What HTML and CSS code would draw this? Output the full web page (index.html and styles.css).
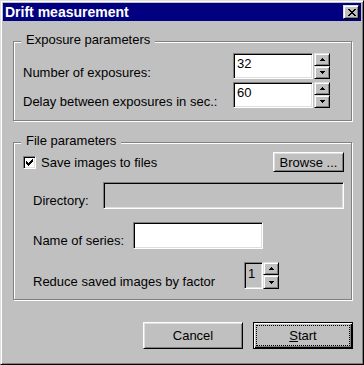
FILE: index.html
```html
<!DOCTYPE html>
<html>
<head>
<meta charset="utf-8">
<link rel="stylesheet" href="styles.css">
</head>
<body>
<div class="dialog">
  <div class="titlebar">
    <span class="title">Drift measurement</span>
    <span class="btn close"><svg width="8" height="7" viewBox="0 0 8 7" shape-rendering="crispEdges"><path d="M0 0h2v1h-2z M6 0h2v1h-2z M1 1h2v1h-2z M5 1h2v1h-2z M2 2h4v1h-4z M3 3h2v1h-2z M2 4h4v1h-4z M1 5h2v1h-2z M5 5h2v1h-2z M0 6h2v1h-2z M6 6h2v1h-2z" fill="#000"/></svg></span>
  </div>

  <div class="group g1">
    <span class="legend">Exposure parameters</span>
    <div class="row r26">
      <span class="label lb12">Number of exposures:</span>
      <span class="field num">32</span>
      <span class="spin">
        <span class="btn sb"><svg width="5" height="3" viewBox="0 0 5 3" shape-rendering="crispEdges"><path d="M2 0h1v1h-1z M1 1h3v1h-3z M0 2h5v1h-5z" fill="#000"/></svg></span>
        <span class="btn sb"><svg width="5" height="3" viewBox="0 0 5 3" shape-rendering="crispEdges"><path d="M0 0h5v1h-5z M1 1h3v1h-3z M2 2h1v1h-1z" fill="#000"/></svg></span>
      </span>
    </div>
    <div class="row r26">
      <span class="label lb12">Delay between exposures in sec.:</span>
      <span class="field num">60</span>
      <span class="spin">
        <span class="btn sb"><svg width="5" height="3" viewBox="0 0 5 3" shape-rendering="crispEdges"><path d="M2 0h1v1h-1z M1 1h3v1h-3z M0 2h5v1h-5z" fill="#000"/></svg></span>
        <span class="btn sb"><svg width="5" height="3" viewBox="0 0 5 3" shape-rendering="crispEdges"><path d="M0 0h5v1h-5z M1 1h3v1h-3z M2 2h1v1h-1z" fill="#000"/></svg></span>
      </span>
    </div>
  </div>

  <div class="group g2">
    <span class="legend">File parameters</span>
    <div class="row r20 center">
      <span class="check"><svg width="9" height="9" viewBox="0 0 9 9" shape-rendering="crispEdges"><path d="M1 3h1v3h-1z M2 4h1v3h-1z M3 5h1v3h-1z M4 4h1v3h-1z M5 3h1v3h-1z M6 2h1v3h-1z M7 1h1v3h-1z" fill="#000"/></svg></span>
      <span class="checktext">Save images to files</span>
      <span class="btn browse">Browse ...</span>
    </div>
    <div class="row r27 m10">
      <span class="label lb11 w70">Directory:</span>
      <span class="field dis dir"></span>
    </div>
    <div class="row r27 m13">
      <span class="label lb11 w100">Name of series:</span>
      <span class="field name"></span>
    </div>
    <div class="row r27 m13">
      <span class="label lb12 w211">Reduce saved images by factor</span>
      <span class="field dis fac">1</span>
      <span class="spin spin27">
        <span class="btn sb sb13"><svg width="5" height="3" viewBox="0 0 5 3" shape-rendering="crispEdges"><path d="M2 0h1v1h-1z M1 1h3v1h-3z M0 2h5v1h-5z" fill="#000"/></svg></span>
        <span class="btn sb sb14"><svg width="5" height="3" viewBox="0 0 5 3" shape-rendering="crispEdges"><path d="M0 0h5v1h-5z M1 1h3v1h-3z M2 2h1v1h-1z" fill="#000"/></svg></span>
      </span>
    </div>
  </div>

  <div class="buttons">
    <span class="btn push">Cancel</span>
    <span class="btn push default"><span class="focus"><u>S</u>tart</span></span>
  </div>
</div>
</body>
</html>
```

FILE: styles.css
```css
html, body {
  margin: 0;
  padding: 0;
  background: #c0c0c0;
}
body {
  font-family: "Liberation Sans", Arial, sans-serif;
  font-size: 13px;
  line-height: 15px;
  color: #000;
}
.dialog {
  width: 364px;
  height: 365px;
  box-sizing: border-box;
  border: 1px solid;
  border-color: #dfdfdf #000 #000 #dfdfdf;
  box-shadow: inset 1px 1px #fff, inset -1px -1px #808080;
  background: #c0c0c0;
  display: flex;
  flex-direction: column;
}
.titlebar {
  margin: 2px 2px 0 2px;
  height: 18px;
  background: #000080;
  display: flex;
  align-items: center;
}
.title {
  flex: 1;
  color: #fff;
  font-weight: bold;
  font-size: 14px;
  line-height: 18px;
  padding-left: 2px;
}
.btn {
  box-sizing: border-box;
  border: 1px solid;
  border-color: #fff #000 #000 #fff;
  box-shadow: inset 1px 1px #dfdfdf, inset -1px -1px #808080;
  background: #c0c0c0;
  display: flex;
  align-items: center;
  justify-content: center;
}
.close {
  width: 16px;
  height: 14px;
  margin-right: 2px;
  border-color: #dfdfdf #000 #000 #dfdfdf;
  box-shadow: inset 1px 1px #fff, inset -1px -1px #808080;
}
.close svg { display: block; margin-left: 1px; }
.group {
  position: relative;
  box-sizing: border-box;
  width: 339px;
  margin-left: 12px;
  border: 1px solid #808080;
  box-shadow: inset 1px 1px #fff, 1px 1px #fff;
  display: flex;
  flex-direction: column;
}
.g1 {
  margin-top: 20px;
  height: 80px;
  padding: 11px 21px 12px 9px;
  gap: 3px;
}
.g2 {
  margin-top: 21px;
  height: 158px;
  padding: 9px 7px 10px 9px;
}
.legend {
  position: absolute;
  top: -10px;
  left: 7px;
  padding: 0 5px;
  background: #c0c0c0;
}
.row {
  display: flex;
}
.r26 { height: 26px; }
.r27 { height: 27px; }
.r20 { height: 20px; }
.center { align-items: center; }
.m10 { margin-top: 10px; }
.m13 { margin-top: 13px; }
.label {
  flex: none;
  white-space: nowrap;
}
.g1 .label { flex: 1; }
.g2 .label { margin-left: 10px; }
.lb12 { padding-top: 12px; }
.lb11 { padding-top: 11px; }
.w70 { width: 70px; }
.w100 { width: 100px; }
.w211 { width: 211px; }
.field {
  box-sizing: border-box;
  border: 1px solid;
  border-color: #808080 #fff #fff #808080;
  box-shadow: inset 1px 1px #000, inset -1px -1px #dfdfdf;
  background: #fff;
  padding: 2px 3px 0 3px;
  white-space: nowrap;
}
.num { width: 80px; }
.dis { background: #c0c0c0; }
.dir { flex: 1; }
.name { width: 130px; }
.fac { width: 19px; padding-top: 3px; }
.spin {
  width: 16px;
  margin-left: 1px;
  display: flex;
  flex-direction: column;
}
.sb {
  height: 13px;
  border-color: #dfdfdf #000 #000 #dfdfdf;
  box-shadow: inset 1px 1px #fff, inset -1px -1px #808080;
}
.sb svg { display: block; }
.spin27 { margin-left: 0; }
.sb13 { height: 13px; }
.sb14 { height: 14px; }
.check {
  box-sizing: border-box;
  width: 13px;
  height: 13px;
  border: 1px solid;
  border-color: #808080 #fff #fff #808080;
  box-shadow: inset 1px 1px #000, inset -1px -1px #dfdfdf;
  background: #fff;
  display: flex;
  align-items: center;
  justify-content: center;
}
.check svg { display: block; }
.checktext {
  flex: 1;
  margin-left: 5px;
}
.browse {
  width: 71px;
  height: 20px;
}
.buttons {
  margin-top: 22px;
  margin-left: 142px;
  display: flex;
  gap: 10px;
}
.push {
  width: 100px;
  height: 27px;
}
.default {
  border-color: #000;
  box-shadow: inset 1px 1px #fff, inset -1px -1px #000, inset -2px -2px #808080;
  padding: 2px;
}
.focus {
  flex: 1;
  align-self: stretch;
  border: 1px dotted #000;
  display: flex;
  align-items: center;
  justify-content: center;
}
```
